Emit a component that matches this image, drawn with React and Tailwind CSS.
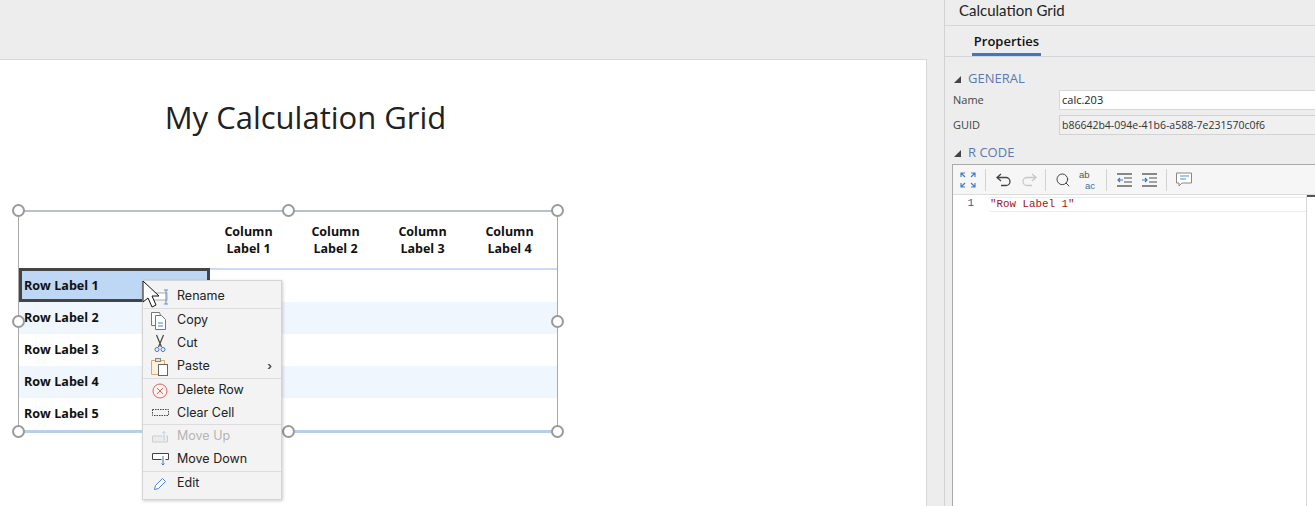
import { Search } from "lucide-react";

const rows = ["Row Label 1", "Row Label 2", "Row Label 3", "Row Label 4", "Row Label 5"];
const cols = ["Label 1", "Label 2", "Label 3", "Label 4"];

function Handle({ className }) {
  return (
    <div
      className={`absolute w-[13px] h-[13px] rounded-full bg-white border-2 border-[#9a9a9a] ${className}`}
    />
  );
}

const icons = {
  rename: (
    <svg width="24" height="20" viewBox="0 0 24 20" fill="none">
      <rect x="2" y="6" width="17" height="7" fill="#fff" stroke="#aaa" />
      <path d="M16 3h4M18 3v14M16 17h4" stroke="#5b8fd8" />
    </svg>
  ),
  copy: (
    <svg width="18" height="18" viewBox="0 0 18 18" fill="none">
      <path d="M5 13.5H0.5V0.5h8l1 3" fill="#fff" stroke="#777" />
      <path d="M4.5 3.5h6l4 4v10h-10z" fill="#fff" stroke="#777" />
      <path d="M7 11h5M7 14h5" stroke="#4a7fd0" />
    </svg>
  ),
  cut: (
    <svg width="14" height="20" viewBox="0 0 14 20" fill="none">
      <path d="M3.5 1l5 12M10.5 1l-5 12" stroke="#444" strokeWidth="1.2" />
      <circle cx="4" cy="15.5" r="2" stroke="#3f78c8" />
      <circle cx="10" cy="15.5" r="2" stroke="#3f78c8" />
    </svg>
  ),
  paste: (
    <svg width="18" height="18" viewBox="0 0 18 18" fill="none">
      <path d="M7 16.5H0.5V2.5h13V6" fill="#fdf1e2" stroke="#e0a868" />
      <rect x="4.5" y="0.5" width="5" height="3" fill="#ddd" stroke="#888" />
      <rect x="7.5" y="6.5" width="9" height="11" fill="#fff" stroke="#666" />
    </svg>
  ),
  del: (
    <svg width="16" height="16" viewBox="0 0 16 16" fill="none">
      <circle cx="8" cy="8" r="7" fill="#fdf2f1" stroke="#d8675c" />
      <path d="M5 5l6 6M11 5l-6 6" stroke="#d8675c" />
    </svg>
  ),
  clear: (
    <svg width="17" height="8" viewBox="0 0 17 8" fill="none">
      <rect x="0.5" y="0.5" width="16" height="6" stroke="#444" strokeDasharray="1.5 1" />
    </svg>
  ),
  up: (
    <svg width="16" height="12" viewBox="0 0 16 12" fill="none">
      <path d="M10.5 5H0.5v6h15V5h-1.5" stroke="#cdcdcd" fill="#ececec" />
      <path d="M12 0.5v9M10.5 2l1.5-1.5L13.5 2" stroke="#bcd0ea" />
    </svg>
  ),
  down: (
    <svg width="17" height="13" viewBox="0 0 17 13" fill="none">
      <path d="M9.5 6.5h-9V0.5h16v6h-3" stroke="#444" fill="#fff" />
      <path d="M11 3v9M9.5 10.5L11 12l1.5-1.5" stroke="#3f78c8" />
    </svg>
  ),
  edit: (
    <svg width="14" height="14" viewBox="0 0 14 14" fill="none">
      <path d="M1.5 12.5l1-4L9.5 1.5l3 3-7 7z" fill="#fff" stroke="#4a82d4" />
    </svg>
  ),
};

function MenuItem({ icon, label, disabled, arrow, short }) {
  return (
    <div className={`flex items-center relative ${short ? "h-[22px]" : "h-[23px]"}`}>
      <div className="w-[34px] flex justify-center items-center shrink-0">{icons[icon]}</div>
      <span className={disabled ? "text-[#b5b5b5]" : "text-[#222]"}>{label}</span>
      {arrow && <span className="absolute right-[9px] text-[11px] font-bold text-[#444]">›</span>}
    </div>
  );
}

function Sep() {
  return <div className="h-px bg-[#dcdcdc]" />;
}

function ContextMenu() {
  return (
    <div className="absolute left-[142px] top-[280px] w-[140px] h-[220px] pt-[4px] bg-[#f3f3f3] border border-[#d4d4d4] shadow-[1px_1px_3px_rgba(0,0,0,0.2)] text-[12.5px] font-['Inter',sans-serif]">
      <MenuItem icon="rename" label="Rename" />
      <Sep />
      <MenuItem icon="copy" label="Copy" />
      <MenuItem icon="cut" label="Cut" />
      <MenuItem icon="paste" label="Paste" arrow />
      <Sep />
      <MenuItem icon="del" label="Delete Row" />
      <MenuItem icon="clear" label="Clear Cell" short />
      <Sep />
      <MenuItem icon="up" label="Move Up" disabled />
      <MenuItem icon="down" label="Move Down" />
      <Sep />
      <MenuItem icon="edit" label="Edit" />
    </div>
  );
}

function CalcGrid() {
  return (
    <div className="relative w-[540px] h-[223px] border-t-2 border-t-[#b8c0cc] border-x border-x-[#a8a8a8] border-b-[3px] border-b-[#b9cfe8]">
      <div className="flex h-[58px] border-b-2 border-[#c9dcf3] font-bold text-[12.5px] leading-[17px] text-[#111]">
        <div className="w-[186px]" />
        {cols.map((c) => (
          <div key={c} className="w-[87px] flex flex-col items-center justify-center">
            <span>Column</span>
            <span>{c}</span>
          </div>
        ))}
      </div>
      {rows.map((r, i) => (
        <div
          key={r}
          className={`h-[32px] flex items-center pl-[5px] font-bold text-[12.6px] text-[#111] ${
            i % 2 === 1 ? "bg-[#eff6fe]" : "bg-white"
          }`}
        >
          {r}
        </div>
      ))}
      {/* selected cell */}
      <div className="absolute left-0 top-[56px] w-[191px] h-[34px] border-[3px] border-[#444] bg-[#bdd7f5] flex items-center pl-[2px] pt-[2px] font-bold text-[12.6px] text-[#111]">
        Row Label 1
      </div>
      <Handle className="left-[-7px] top-[-8px]" />
      <Handle className="left-[263px] top-[-8px]" />
      <Handle className="left-[532px] top-[-8px]" />
      <Handle className="left-[-7px] top-[103px]" />
      <Handle className="left-[532px] top-[103px]" />
      <Handle className="left-[-7px] top-[213px]" />
      <Handle className="left-[263px] top-[213px]" />
      <Handle className="left-[532px] top-[213px]" />
    </div>
  );
}

function Cursor() {
  return (
    <svg className="absolute left-[141px] top-[279px]" width="28" height="34" viewBox="0 0 28 34" fill="none">
      <path d="M2 2v21l5-4 4 9 4-2-4-9h7z" fill="#fff" stroke="#111" strokeWidth="1" />
    </svg>
  );
}

function Section({ label }) {
  return (
    <div className="flex items-center h-[20px] pl-[9px] text-[13px] text-[#5a7bb0]">
      <span className="w-0 h-0 border-l-[7px] border-l-transparent border-b-[7px] border-b-[#444] mr-[7px]" />
      <span>{label}</span>
    </div>
  );
}

function ToolSep() {
  return <div className="w-px h-[22px] bg-[#d2d2d2]" />;
}

function IndentIcon({ flip }) {
  return (
    <svg className="ml-[10px]" width="15" height="14" viewBox="0 0 15 14" fill="none">
      <path d="M0 1h15M0 13h15" stroke="#888" strokeWidth="2" />
      <path d="M7 5h8M7 9h8" stroke="#888" strokeWidth="1.5" />
      <path d={flip ? "M0 7h5M3 5l2 2-2 2" : "M6 7H1M3 5L1 7l2 2"} stroke="#3f78c8" strokeWidth="1.2" />
    </svg>
  );
}

function Toolbar() {
  return (
    <div className="h-[30px] flex items-center bg-[#f6f6f6] border-b border-[#dcdcdc] pl-[7px]">
      <svg width="16" height="16" viewBox="0 0 16 16" fill="none" stroke="#3f78c8" strokeWidth="1.1">
        <path d="M1 5V1h4M1 1l4 4M15 5V1h-4M15 1l-4 4M1 11v4h4M1 15l4-4M15 11v4h-4M15 15l-4-4" />
      </svg>
      <div className="ml-[9px]"><ToolSep /></div>
      <svg className="ml-[10px]" width="16" height="14" viewBox="0 0 16 14" fill="none" stroke="#444" strokeWidth="1.3">
        <path d="M5 1L1 4.5 5 8M1 4.5h9a4 4 0 010 8H5" />
      </svg>
      <svg className="ml-[9px]" width="16" height="14" viewBox="0 0 16 14" fill="none" stroke="#c8c8c8" strokeWidth="1.3">
        <path d="M11 1l4 3.5L11 8M15 4.5H6a4 4 0 000 8h5" />
      </svg>
      <div className="ml-[8px]"><ToolSep /></div>
      <Search className="ml-[9px] text-[#444]" size={16} strokeWidth={1.5} />
      <div className="ml-[8px] w-[18px] flex flex-col text-[9.5px] leading-[11px] text-[#555] font-['Liberation_Sans',sans-serif]">
        <span>ab</span>
        <span className="pl-[6px] text-[#3f6f9f]">ac</span>
      </div>
      <div className="ml-[9px]"><ToolSep /></div>
      <IndentIcon />
      <IndentIcon flip />
      <div className="ml-[9px]"><ToolSep /></div>
      <svg className="ml-[9px]" width="17" height="16" viewBox="0 0 17 16" fill="none">
        <path d="M0.5 1h15v10H6l-3 3v-3H0.5z" fill="#fff" stroke="#888" />
        <path d="M4 4h9M4 7h6" stroke="#8fb4e0" strokeWidth="1.5" />
      </svg>
    </div>
  );
}

function Panel() {
  return (
    <div className="w-[371px] shrink-0 h-full flex flex-col border-l border-[#d2d2d2] bg-[#ededed] font-['Open_Sans',sans-serif]">
      <div className="h-[26px] shrink-0 flex items-center pl-[14px] pb-[4px] border-b border-[#d6d6d6] text-[15px] text-[#222] font-['Lato',sans-serif]">
        Calculation Grid
      </div>
      <div className="h-[31px] shrink-0 border-b border-[#d2d6da] pl-[27px]">
        <div className="w-[69px] h-[30px] border-b-[3px] border-[#3e78c2] text-center text-[13px] font-semibold leading-[31px] text-[#111]">
          Properties
        </div>
      </div>
      <div className="pt-[12px]">
        <Section label="GENERAL" />
      </div>
      <div className="flex items-center h-[20px] mt-[1px] text-[11px] text-[#444]">
        <span className="w-[114px] pl-[8px] shrink-0">Name</span>
        <div className="flex-1 mr-[-3px] h-[20px] bg-white border border-[#d8d8d8] pl-[2px] leading-[18px] text-[#222]">calc.203</div>
      </div>
      <div className="flex items-center h-[20px] mt-[5px] text-[11px] text-[#444]">
        <span className="w-[114px] pl-[8px] shrink-0">GUID</span>
        <div className="flex-1 mr-[-3px] h-[20px] bg-[#f0f0f0] border border-[#d2d2d2] pl-[2px] leading-[18px] text-[10.5px] text-[#333]">
          b86642b4-094e-41b6-a588-7e231570c0f6
        </div>
      </div>
      <div className="mt-[8px]">
        <Section label="R CODE" />
      </div>
      <div className="flex-1 ml-[7px] mt-[1px] border-l border-t border-[#aaa] bg-white flex flex-col">
        <Toolbar />
        <div className="flex-1 flex font-['Liberation_Mono',monospace] text-[10.83px] leading-[13px]">
          <div className="flex-1 flex pt-[2px] items-start">
            <span className="w-[37px] pr-[16px] text-right text-[#1f5fa0]">1</span>
            <span className="flex-1 bg-white border-y border-[#ececec] text-[#a31515]">"Row Label 1"</span>
          </div>
          <div className="w-[9px] border-l border-[#d8d8d8]">
            <div className="h-[2px] bg-[#555]" />
          </div>
        </div>
      </div>
    </div>
  );
}

export default function App() {
  return (
    <div className="relative w-[1315px] h-[506px] overflow-hidden flex bg-[#ededed] font-['Open_Sans',sans-serif]">
      <div className="flex-1 pt-[59px] pr-[17px]">
        <div className="h-full bg-white border-t border-r border-[#d8d8d8] pl-[18px] pt-[35px]">
          <div className="w-[575px] text-center text-[31px] leading-[44px] text-[#222]">My Calculation Grid</div>
          <div className="mt-[71px]">
            <CalcGrid />
          </div>
        </div>
      </div>
      <Panel />
      <ContextMenu />
      <Cursor />
    </div>
  );
}
